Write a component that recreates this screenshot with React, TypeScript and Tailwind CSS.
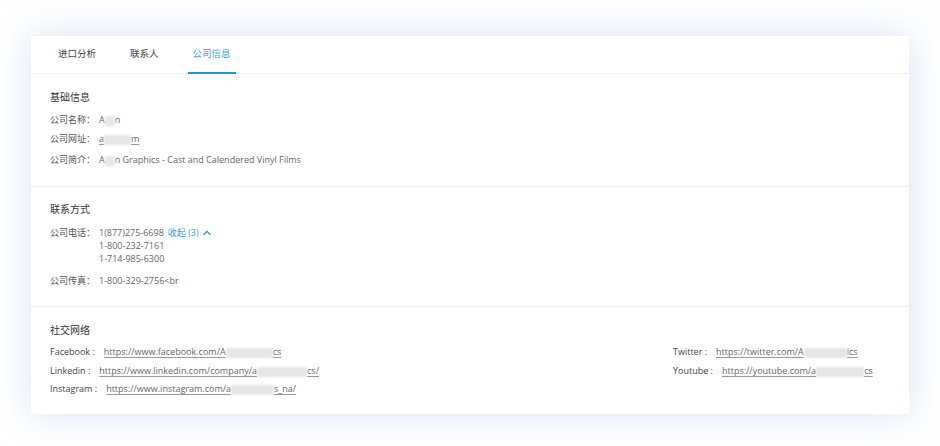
import type { ReactNode } from 'react';

const FONT = "font-['Open_Sans','Noto_Sans_CJK_SC',sans-serif]";

function Blur({ w }: { w: number }) {
  return <span className="inline-block h-[10px] align-middle bg-[#e6e6e6] blur-[1px]" style={{ width: w }} />;
}

function Row({ label, children, className = '' }: { label: string; children: ReactNode; className?: string }) {
  return (
    <div className={`flex items-start text-[9px] leading-[13px] ${className}`}>
      <span className="w-[49px] shrink-0 whitespace-nowrap text-[#555]">{label}</span>
      <div className="text-[#666]">{children}</div>
    </div>
  );
}

function Social({ label, children, className = '' }: { label: string; children: ReactNode; className?: string }) {
  return (
    <div className={`flex items-center whitespace-nowrap text-[9px] leading-[13px] ${className}`}>
      <span className="text-[#444]">{label}</span>
      <a className="ml-[9px] text-[#666] underline decoration-[#999] underline-offset-2">{children}</a>
    </div>
  );
}

export default function App() {
  const tabs = ['进口分析', '联系人', '公司信息'];
  return (
    <div className={`min-h-[446px] w-[940px] bg-white pt-[35px] pl-[31px] ${FONT}`}>
      <div className="w-[878px] h-[379px] bg-white border-t border-[#f0f1f5] shadow-[0_0_36px_rgba(196,204,236,0.6)]">
        {/* Tabs */}
        <div className="flex gap-[24px] h-[38px] border-b border-[#eeeeee] pl-[22px]">
          {tabs.map((t, i) => (
            <div
              key={t}
              className={`relative flex items-center px-[5px] text-[9.5px] ${
                i === 2 ? 'text-[#3a9fd6]' : 'text-[#444]'
              }`}
            >
              {t}
              {i === 2 && <span className="absolute bottom-[-1px] left-0 right-0 h-[2px] bg-[#1e97d4]" />}
            </div>
          ))}
        </div>

        {/* 基础信息 */}
        <div className="pl-[19px] pt-[16px] pb-[20px] border-b border-[#eeeeee]">
          <div className="text-[10px] leading-[14px] text-[#333]">基础信息</div>
          <Row label="公司名称：" className="mt-[9px]">
            A<Blur w={10} />n
          </Row>
          <Row label="公司网址：" className="mt-[6px]">
            <span className="underline decoration-[#999] underline-offset-2">
              a<Blur w={27} />m
            </span>
          </Row>
          <Row label="公司简介：" className="mt-[8px]">
            A<Blur w={10} />n Graphics - Cast and Calendered Vinyl Films
          </Row>
        </div>

        {/* 联系方式 */}
        <div className="pl-[19px] pt-[15px] pb-[19px] border-b border-[#eeeeee]">
          <div className="text-[10px] leading-[14px] text-[#333]">联系方式</div>
          <Row label="公司电话：" className="mt-[10px]">
            <div className="flex items-center">
              1(877)275-6698
              <span className="ml-[4px] text-[#3a9fd6]">收起 (3)</span>
              <svg className="ml-[3px]" width="10" height="10" viewBox="0 0 10 10" fill="none" stroke="#3a9fd6" strokeWidth="1.3">
                <path d="M1.5 7 L5 3.2 L8.5 7" />
              </svg>
            </div>
            <div>1-800-232-7161</div>
            <div>1-714-985-6300</div>
          </Row>
          <Row label="公司传真：" className="mt-[9px]">
            1-800-329-2756&lt;br
          </Row>
        </div>

        {/* 社交网络 */}
        <div className="pl-[19px] pt-[16px]">
          <div className="text-[10px] leading-[14px] text-[#333]">社交网络</div>
          <div className="flex mt-[8px]">
            <div className="w-[623px] flex flex-col">
              <Social label="Facebook :">
                https://www.facebook.com/A<Blur w={47} />cs
              </Social>
              <Social label="Linkedin :" className="mt-[6px]">
                https://www.linkedin.com/company/a<Blur w={50} />cs/
              </Social>
              <Social label="Instagram :" className="mt-[5px]">
                https://www.instagram.com/a<Blur w={43} />s_na/
              </Social>
            </div>
            <div className="flex flex-col">
              <Social label="Twitter :">
                https://twitter.com/A<Blur w={43} />ics
              </Social>
              <Social label="Youtube :" className="mt-[6px]">
                https://youtube.com/a<Blur w={48} />cs
              </Social>
            </div>
          </div>
        </div>
      </div>
    </div>
  );
}
